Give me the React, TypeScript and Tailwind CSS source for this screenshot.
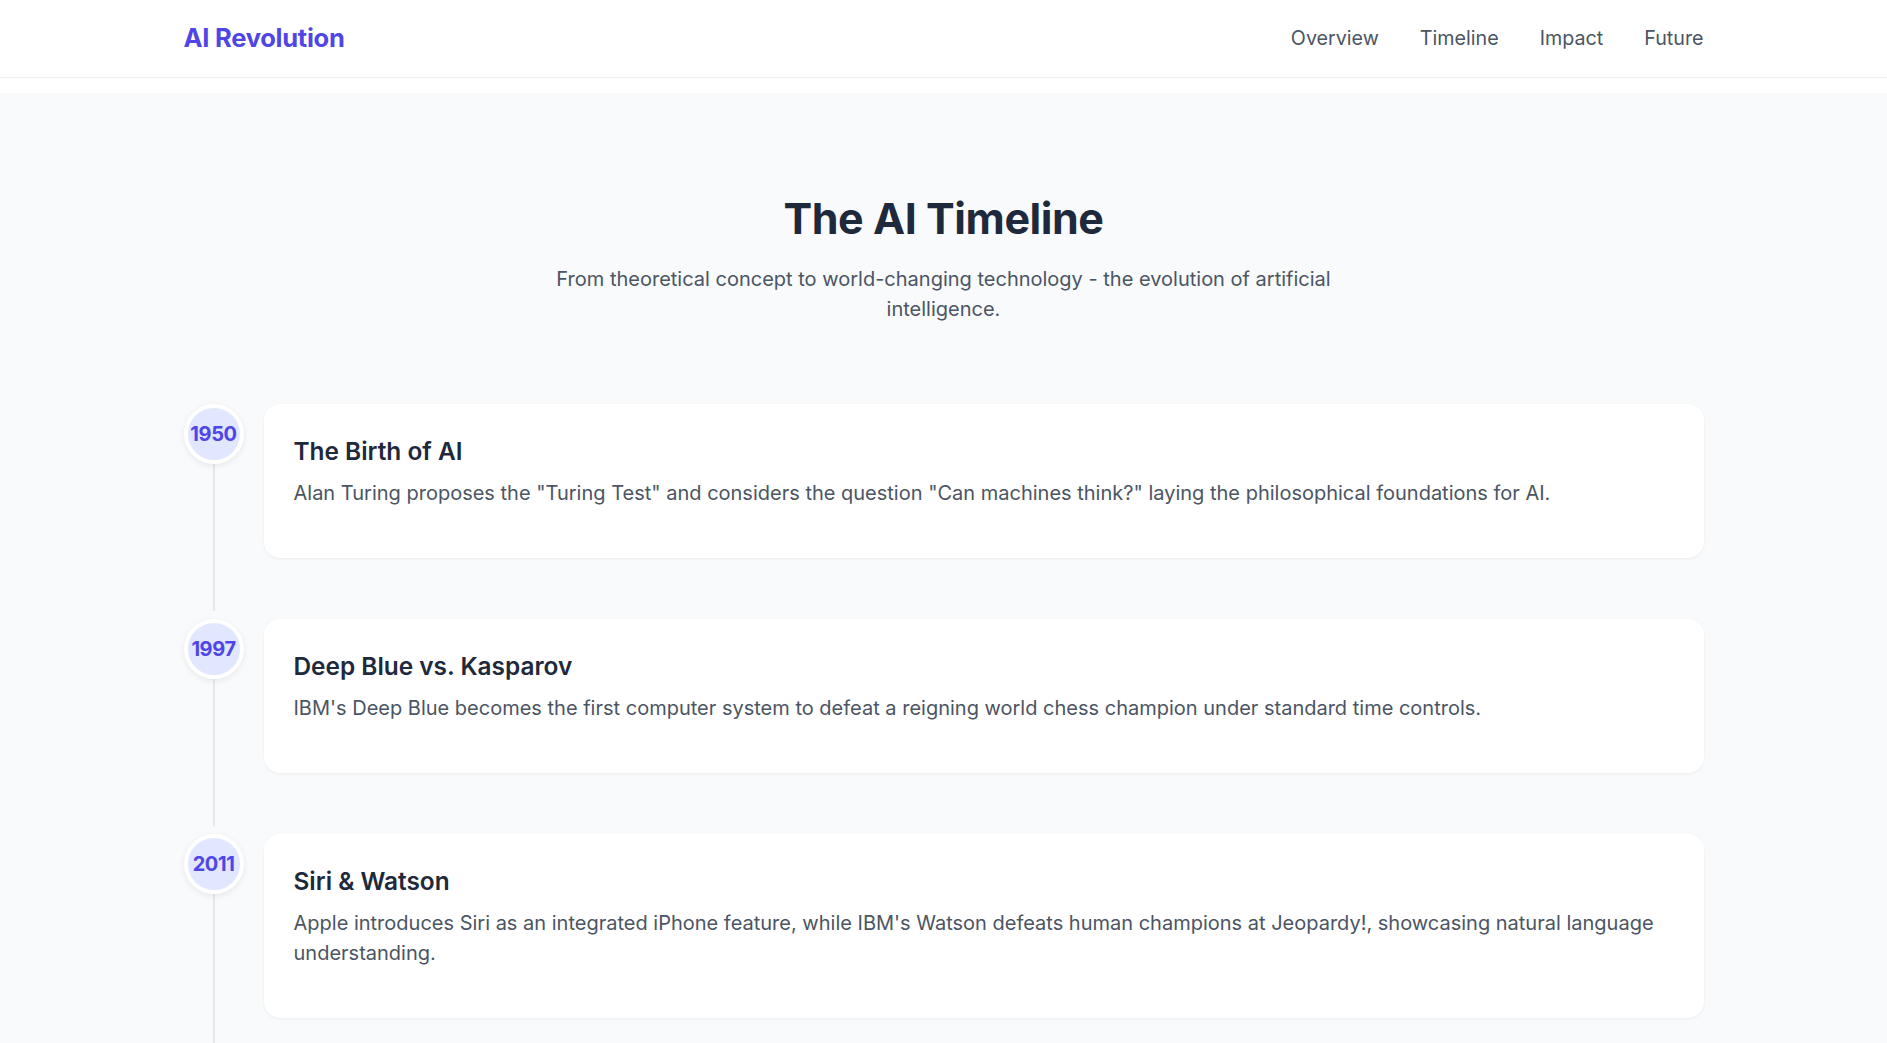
import React from "react";

const items = [
  {
    year: "1950",
    title: "The Birth of AI",
    text: 'Alan Turing proposes the "Turing Test" and considers the question "Can machines think?" laying the philosophical foundations for AI.',
  },
  {
    year: "1997",
    title: "Deep Blue vs. Kasparov",
    text: "IBM's Deep Blue becomes the first computer system to defeat a reigning world chess champion under standard time controls.",
  },
  {
    year: "2011",
    title: "Siri & Watson",
    text: "Apple introduces Siri as an integrated iPhone feature, while IBM's Watson defeats human champions at Jeopardy!, showcasing natural language understanding.",
  },
];

export default function App() {
  return (
    <div className="min-h-screen bg-white font-['Inter','Liberation_Sans',sans-serif]">
      <header className="h-[78px] border-b border-[#f0f1f3] bg-white">
        <div className="mx-auto flex h-full max-w-[1536px] items-center justify-between px-2">
          <div className="text-[25.5px] font-bold text-[#4f46e5] tracking-[-0.01em]">AI Revolution</div>
          <nav className="flex items-center gap-[41px] text-[19.7px] text-[#4b5563]">
            <a>Overview</a>
            <a>Timeline</a>
            <a>Impact</a>
            <a>Future</a>
          </nav>
        </div>
      </header>
      <div className="h-[15px] bg-white" />
      <section className="bg-[#f8fafc] pt-[101px] pb-24">
        <div className="mx-auto max-w-[1536px] px-2">
          <h1 className="mb-[22px] text-center text-[43px] font-bold leading-[48px] tracking-[-0.01em] text-[#1e293b]">
            The AI Timeline
          </h1>
          <p className="mx-auto mb-20 max-w-[820px] text-center text-[20px] leading-[30px] text-[#4b5563]">
            From theoretical concept to world-changing technology - the evolution of artificial intelligence.
          </p>
          <div>
            {items.map((it) => (
              <div key={it.year} className="relative pb-[61px] pl-20">
                <div className="absolute left-[29px] top-[60px] bottom-[8px] w-[2px] bg-[#e2e8f0]" />
                <div className="absolute left-0 top-0 flex h-[60px] w-[60px] items-center justify-center rounded-full border-4 border-white bg-[#e0e7ff] shadow-[0_2px_6px_rgba(0,0,0,0.08)]">
                  <span className="text-[20px] font-bold tracking-[-0.02em] text-[#4f46e5]">{it.year}</span>
                </div>
                <div className="rounded-2xl bg-white px-[30px] pt-8 pb-[50px] shadow-[0_1px_3px_rgba(0,0,0,0.06)]">
                  <h3 className="mb-3 text-[24.4px] font-semibold leading-[30px] text-[#1e293b]">{it.title}</h3>
                  <p className="text-[20px] leading-[30px] text-[#4b5563]">{it.text}</p>
                </div>
              </div>
            ))}
          </div>
        </div>
      </section>
    </div>
  );
}
